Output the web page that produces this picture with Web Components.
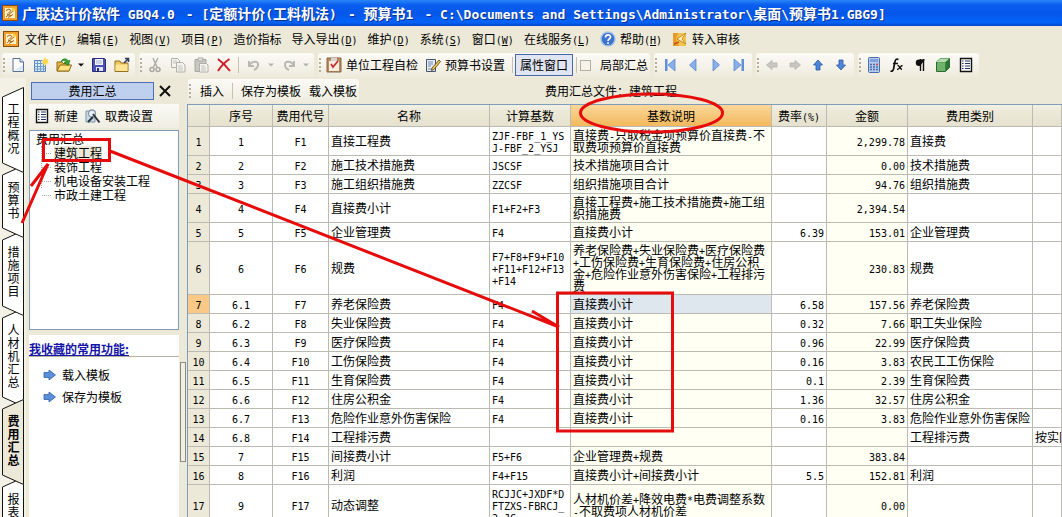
<!DOCTYPE html>
<html lang="zh-CN">
<head>
<meta charset="utf-8">
<title>广联达计价软件 GBQ4.0</title>
<style>
html, body { margin: 0; height: 100%; }
body { overflow: hidden; background: #ece9d8; color: #000; font: 12px/14px "Noto Sans CJK SC", sans-serif; }
</style>
</head>
<body>
<gbq-app></gbq-app>
<script>
const BASE = `
*{box-sizing:border-box}
:host{display:block}
button,a,input{font:inherit;color:inherit;margin:0;padding:0;border:0;background:none;text-decoration:none;white-space:nowrap}
.l{font-family:"DejaVu Sans Mono",monospace;font-size:10px;line-height:0}
svg{display:block;flex:none}
`;
const esc = s => s.replace(/&/g, '&amp;').replace(/</g, '&lt;');
/* Half-width runs are set in the monospaced face. */
const t = s => s.replace(/[\x20-\x7e]+/g, m => `<span class="l">${esc(m)}</span>`);
const key = (s, k) => `${t(s)}<span class="l">(<u>${k}</u>)</span>`;

function define(name, css, html) {
  customElements.define(name, class extends HTMLElement {
    constructor() { super(); this.attachShadow({ mode: 'open' }); }
    connectedCallback() {
      this.shadowRoot.innerHTML = `<style>${BASE}${css}</style>` + (typeof html === 'function' ? html(this) : html);
    }
  });
}

const ICONS = {
  logo: `<rect x=".5" y=".5" width="15" height="15" fill="#f0a030" stroke="#8a4a08"/><path d="M3 3h8l2 2v8H3z" fill="#fff3c8"/><path d="M4 5.500l3-1.500 2 1.500-3 3M4 12l8-7M6 12.500l5-3M5 9l4 2" stroke="#a85a10" stroke-width="1" fill="none"/><path d="M9 2l5 2-3 3z" fill="#ffce3a"/>`,
  doc: `<path d="M3 1.500h7l3.500 3.500v9.500H3z" fill="#fff" stroke="#5a6f98"/><path d="M10 1.500V5h3.500" fill="#cfe0f8" stroke="#5a6f98"/><path d="M4 13.500h9V8z" fill="#dce8fa"/>`,
  sheet: `<path d="M1.500 3.500h11v11h-11z" fill="#dcebfa" stroke="#4f7cae"/><path d="M1 6.500h12M1 9.500h12M1 12h12M4.500 3v12M7.500 3v12M10.500 3v12" stroke="#6d9cc9"/><path d="M12 0l1 2.500L15.500 2l-1 2.300 1.500 1.700-2.500.5L13 9l-1.600-2L9 7.500l1-2.300L8.500 3l2.500-.2z" fill="#ffd64a"/>`,
  open: `<path d="M1 5h5l1 1.500h6V14H1z" fill="#e9b53c" stroke="#8d6a16"/><path d="M1 14l3-6h11.500L13 14z" fill="#ffe07c" stroke="#8d6a16"/><path d="M5 5c1-4 6-4 7-1l2-.5-2 5-4-3 2-.6C9 3 7 3 5 5z" fill="#37a534" stroke="#17701a" stroke-width=".6"/>`,
  save: `<path d="M1.500 1.500h12l1 1v12h-13z" fill="#4a50b8" stroke="#262c78"/><path d="M4 2h8v6H4z" fill="#f3f5fb"/><path d="M5 4h6M5 6h6" stroke="#a6aecb"/><path d="M5 10h7v4H5z" fill="#dfe3ef"/><path d="M6 11h2v3H6z" fill="#262c78"/>`,
  folder: `<path d="M1 4h5l1 2h7v8.500H1z" fill="#eec65c" stroke="#927020"/><path d="M1.500 7.500h12V14h-12z" fill="#ffe494"/><path d="M10 6l4-4M11 1.500h3.500V5" stroke="#333b58" stroke-width="1.500" fill="none"/>`,
  cut: `<path d="M6 1l4 9M11 1L6.500 10" stroke="#a9a9a2" stroke-width="1.400"/><circle cx="5" cy="12.500" r="2" fill="none" stroke="#a9a9a2" stroke-width="1.500"/><circle cx="11" cy="12.500" r="2" fill="none" stroke="#a9a9a2" stroke-width="1.500"/>`,
  copy: `<path d="M1.500 1.500h6l2 2v7h-8z" fill="#f4f3ee" stroke="#b1b0a8"/><path d="M6.500 5.500h6l2.500 2.500v7H6.500z" fill="#f4f3ee" stroke="#b1b0a8"/><path d="M3 4h4M3 6h3M8 9h4M8 11h5M8 13h5" stroke="#c2c1b9"/>`,
  paste: `<path d="M2 2.500h11v12H2z" fill="#c9c8c0" stroke="#a9a8a0"/><path d="M5 1h5v3H5z" fill="#e8e7e0" stroke="#a9a8a0"/><path d="M6.500 6.500h7l1.500 1.500v7H6.500z" fill="#f5f4ef" stroke="#b1b0a8"/><path d="M8 9h4M8 11h5M8 13h5" stroke="#c2c1b9"/>`,
  del: `<path d="M2 2c4 3 8 7 12 12M13.500 2C9 5 5 9 2 14" stroke="#cf1f2c" stroke-width="2" fill="none"/>`,
  undo: `<path d="M3 4v5h5M3.500 8.500C6 3 13 4 12 8c0 2-2 4-4 5" stroke="#b9b8b1" stroke-width="2" fill="none"/>`,
  redo: `<path d="M13 4v5H8M12.500 8.500C10 3 3 4 4 8c0 2 2 4 4 5" stroke="#b9b8b1" stroke-width="2" fill="none"/>`,
  check: `<path d="M1 1h14v14H1z" fill="#b98b62" stroke="#8a6442"/><path d="M3 4h10v10H3z" fill="#f6ece0"/><path d="M5 1h6v3H5z" fill="#d8d3cb"/><path d="M5 7l2 3 5-6" stroke="#c53030" stroke-width="1.800" fill="none"/>`,
  edit: `<path d="M1.500 2.500h9v12h-9z" fill="#e4ebf5" stroke="#44546e"/><path d="M3 5h5M3 7h5M3 9h3M3 12h5" stroke="#7187a8"/><path d="M7 11l7-8 1.500 1.500-6.500 8-2.500 1z" fill="#f1c455" stroke="#4b3b14" stroke-width=".8"/>`,
  first: `<path d="M3 2h2.500v12H3z" fill="#5f8fd8"/><path d="M13 2v12L6 8z" fill="#8ab0ea" stroke="#4f80cc" stroke-width=".7"/>`,
  prev: `<path d="M11 2v12L4.500 8z" fill="#8ab0ea" stroke="#4f80cc" stroke-width=".7"/>`,
  next: `<path d="M5 2v12l6.500-6z" fill="#8ab0ea" stroke="#4f80cc" stroke-width=".7"/>`,
  last: `<path d="M10.500 2H13v12h-2.500z" fill="#5f8fd8"/><path d="M3 2v12l7-6z" fill="#8ab0ea" stroke="#4f80cc" stroke-width=".7"/>`,
  left: `<path d="M2.500 8L8 3.500V6h5v4H8v2.500z" fill="#c7c6c0" stroke="#b0afa8" stroke-width=".7"/>`,
  right: `<path d="M13.500 8L8 3.500V6H3v4h5v2.500z" fill="#c7c6c0" stroke="#b0afa8" stroke-width=".7"/>`,
  up: `<path d="M8 3l4.500 5H10v5H6V8H3.500z" fill="#4f86dc" stroke="#2a57a4" stroke-width=".8"/>`,
  down: `<path d="M8 13L3.500 8H6V3h4v5h2.500z" fill="#4f86dc" stroke="#2a57a4" stroke-width=".8"/>`,
  calc: `<rect x="2.500" y=".5" width="11" height="15" rx="1" fill="#b5cbee" stroke="#4a6ca8"/><path d="M4 2h8v3H4z" fill="#7fa2da"/><path d="M4 7.500h8M4 10h8M4 12.500h8" stroke="#496ca6" stroke-width="1.500" stroke-dasharray="2 1"/><path d="M10 7.500h2" stroke="#d9534a" stroke-width="1.500"/>`,
  fx: `<path d="M9.500 2.500c-2-1-3 0-3.500 2L4.500 12c-.5 2-1.500 2.500-3 2M4 6.500h5" stroke="#111" stroke-width="1.700" fill="none"/><path d="M8.500 8.500c2-.5 2 3.500 4.500 4M13.500 8.500c-2 0-3 4-5.500 4" stroke="#111" stroke-width="1.400" fill="none"/>`,
  para: `<path d="M13 2.500H7a3 3 0 0 0 0 6.500h1z" fill="#111"/><path d="M8.500 2v12M11.500 2v12" stroke="#111" stroke-width="1.400"/>`,
  cube: `<path d="M1.500 5l4-3.500h9v9l-4 4h-9z" fill="#4e9a4e" stroke="#2d6a30"/><path d="M1.500 5l4-3.500h9L10.500 5z" fill="#b5deb0"/><path d="M10.500 5l4-3.500v9l-4 4z" fill="#2f7434"/><path d="M2 5.500h8V14H2z" fill="#6db36a"/>`,
  list: `<path d="M2.500 1.500h11v13h-11z" fill="#fff" stroke="#111" stroke-width="1.400"/><path d="M4 4h1.500M4 6.500h1.500M4 9h1.500M4 11.500h1.500M7 4h5M7 6.500h5M7 9h5M7 11.500h5" stroke="#24305f"/>`,
  help: `<circle cx="8" cy="8" r="7" fill="#3c73cc" stroke="#a9c2ea" stroke-width="1.400"/><path d="M5.500 6.500c0-3.500 5-3.500 5-.5 0 2-2.500 1.800-2.500 4M8 11.200v1.800" stroke="#fff" stroke-width="1.700" fill="none"/>`,
  audit: `<path d="M1 2h13v13H1z" fill="#f4c34c"/><path d="M1 2h5L4 8l3 7H1z" fill="#e99a28"/><path d="M5 8l9-6-4 6 4 5z" fill="#fff1b8" stroke="#b87a18" stroke-width=".8"/><path d="M2 13l5-2" stroke="#c1521c" stroke-width="1.500"/>`,
  gear: `<path d="M1 3h9v11H1z" fill="#c9dbea" stroke="#7d93a8"/><circle cx="7" cy="5.500" r="3.500" fill="#e8f1f8" stroke="#8a96a2" stroke-width="1.300"/><path d="M8 6l6.500 8.500M3 14l5-5" stroke="#2d333a" stroke-width="2"/>`,
  go: `<path d="M2 5.500h5V3l6.500 5L7 13v-2.500H2z" fill="#5b8fd8" stroke="#2f5fa8" stroke-width=".8"/>`,
  close: `<path d="M3 3l10 10M13 3L3 13" stroke="#111" stroke-width="2"/>`,
  arrow: `<path d="M5 6.500h6L8 9.500z" fill="#111"/>`,
  arrowoff: `<path d="M5 6.500h6L8 9.500z" fill="#b5b4ac"/>`
};
define('gbq-icon', ':host{display:block;flex:none;width:16px;height:16px}',
  el => `<svg width="16" height="16" viewBox="0 0 16 16" aria-hidden="true">${ICONS[el.getAttribute('name')]}</svg>`);

define('gbq-title', `
:host{display:flex;align-items:center;gap:4px;height:26px;padding-left:2px;color:#fff;
background:linear-gradient(#2a86f8,#0a5ff0 18%,#0456e8 55%,#0464fb 85%,#0347c8)}
h1{display:flex;gap:11px;margin:0;font:bold 14px/18px "Noto Sans CJK SC",sans-serif;white-space:nowrap;text-shadow:1px 1px 0 #0a2f8c}
.l{font-size:13px}`,
  `<gbq-icon name="logo"></gbq-icon><h1>${['广联达计价软件 GBQ4.0', '- [定额计价(工料机法)', '- 预算书1', '- C:\\Documents and Settings\\Administrator\\桌面\\预算书1.GBG9]'].map(s => `<span>${t(s)}</span>`).join('')}</h1>`);

define('gbq-menu', `
:host{display:flex;align-items:center;height:26px;padding-left:3px;gap:10px}
button{display:flex;align-items:center;height:20px}
button gbq-icon{margin-right:4px}
gbq-icon.app{margin-right:-4px}
u{text-underline-offset:1px}`,
  `<gbq-icon class="app" name="logo"></gbq-icon>` +
  [['文件','F'],['编辑','E'],['视图','V'],['项目','P'],['造价指标'],['导入导出','D'],['维护','D'],['系统','S'],['窗口','W'],['在线服务','L'],['帮助','H','help'],['转入审核','','audit']]
  .map(([s, k, i]) => `<button>${i ? `<gbq-icon name="${i}"></gbq-icon>` : ''}<span>${k ? key(s, k) : s}</span></button>`).join(''));

define('gbq-group', `
:host{display:flex;flex:none;align-items:center;height:24px;padding-right:2px;border-radius:3px;background:linear-gradient(#fbfaf6,#f4f2e8 60%,#eeebdd)}
i{width:4px;height:16px;background:radial-gradient(circle at 1px 1px,#b4b0a0 1px,transparent 1px) 1px 1px/4px 4px}`,
  `<i></i><slot></slot>`);

define('gbq-tool', `
:host{flex:none}
button{display:flex;align-items:center;justify-content:center;min-width:23px;height:22px;gap:4px}
:host([name^=arrow]) button{min-width:12px;width:12px}
:host([pressed]) button{padding:0 4px;border:1px solid #4a68a8;background:#dfe5f2}
button:has(.t):has(gbq-icon){padding-left:4px}`,
  el => `<button>${el.getAttribute('name') ? `<gbq-icon name="${el.getAttribute('name')}"></gbq-icon>` : ''}${el.textContent ? '<span class="t"><slot></slot></span>' : ''}</button>`);

define('gbq-sep', ':host{width:1px;height:16px;background:#c5c2b2;margin:0 3px;flex:none}', '');

const tools = s => s.split(' ').map(n => n === '|' ? '<gbq-sep></gbq-sep>' : `<gbq-tool name="${n}"></gbq-tool>`).join('');
define('gbq-toolbar', `
:host{display:flex;align-items:center;gap:4px;height:26px;padding-left:2px}
.a{margin-right:3px}
.b{margin:0 2px 0 7px}
label{display:flex;align-items:center;gap:9px;white-space:nowrap}
input{appearance:none;width:11px;height:11px;border:1px solid #b3b09f;background:#f5f3ea}`,
  `<gbq-group>${tools('doc sheet open arrow save folder')}</gbq-group>
   <gbq-group>${tools('cut copy paste del | undo arrowoff redo arrowoff')}</gbq-group>
   <gbq-group><gbq-tool class="a" name="check">单位工程自检</gbq-tool><gbq-tool name="edit">预算书设置</gbq-tool>
   <gbq-sep class="b"></gbq-sep><gbq-tool pressed>属性窗口</gbq-tool><gbq-sep></gbq-sep>
   <label><input type="checkbox">局部汇总</label></gbq-group>
   <gbq-group>${tools('first prev next last')}</gbq-group>
   <gbq-group>${tools('left right up down')}</gbq-group>
   <gbq-group>${tools('calc fx para cube list')}</gbq-group>`);

define('gbq-tab', `
:host{position:relative;flex:none;width:22px;margin-bottom:-8px;--fill:#fff}
:host([active]){--fill:#ece9d8;z-index:9}
button{position:relative;display:block;width:22px;padding:15px 4px 19px 5px;line-height:13px;white-space:normal;word-break:break-all;text-align:center}
:host([active]) button{font-weight:bold}
.s{position:absolute;inset:0;display:flex;flex-direction:column}
.m{flex:1;border:1px solid #111;border-width:0 1px;background:var(--fill)}
path{fill:var(--fill)}
polyline{fill:none;stroke:#111}`,
  `<div class="s"><svg width="22" height="10"><path d="M0 10L22 0v10z"/><polyline points="0.500,10 21.500,0.500 21.500,10"/></svg><div class="m"></div>
   <svg width="22" height="10"><path d="M0 0h22v10z"/><polyline points="0.500,0 21.500,9.500 21.500,0"/></svg></div><button><slot></slot></button>`);

define('gbq-tabs', `
:host{display:flex;flex:none;flex-direction:column;width:26px;padding:9px 0 0 2px;overflow:hidden;background:#f3f1e6}
${[1,2,3,4,5,6].map(i => `gbq-tab:nth-child(${i}){z-index:${7 - i}}`).join('')}
gbq-tab[active]{z-index:9}`,
  ['工程概况','预算书','措施项目','人材机汇总','费用汇总','报表'].map(s => `<gbq-tab${s === '费用汇总' ? ' active' : ''}>${s}</gbq-tab>`).join(''));

define('gbq-side', `
:host{display:flex;flex:none;flex-direction:column;width:153px;padding:4px 0 0 3px}
.head{display:flex;align-items:center;gap:3px;padding-left:2px}
h2{margin:0;width:123px;height:18px;border:1px solid #4a6fb5;background:#bed0ee;font:12px/16px "Noto Sans CJK SC",sans-serif;text-align:center}
.bar{display:flex;gap:3px;height:24px;margin:4px 0 2px;align-items:center;background:linear-gradient(#faf9f4,#f0eee2);padding-left:1px}
.tree{height:200px;flex:none;border:1px solid #7f9db9;background:#fff;padding:1px 0 0 6px}
.tree a{display:block;line-height:14px;width:max-content}
ul{list-style:none;margin:0 0 0 5px;padding:0}
li{position:relative;padding-left:12px;border-left:1px dotted #aaa}
li::before{content:"";position:absolute;left:0;top:7px;width:9px;border-top:1px dotted #aaa}
li:last-child{border-color:transparent}
.on{background:#ece9d8}
.fav{flex:1;background:#fff;margin-top:5px;padding-top:7px}
h3{margin:0 0 7px;height:15px;border-bottom:1px solid #b5b2a0;font:bold 12px/14px "Noto Sans CJK SC",sans-serif;color:#1414a8}
h3 a{border-bottom:1px solid #1414a8;display:inline-block;height:14px}
.go{display:flex;align-items:center;gap:4px;height:22px;padding-left:13px}`,
  `<div class="head"><h2>费用汇总</h2><button title="关闭"><gbq-icon name="close"></gbq-icon></button></div>
   <div class="bar"><gbq-tool name="list">新建</gbq-tool><gbq-tool name="gear">取费设置</gbq-tool></div>
   <div class="tree"><a href="#">费用汇总</a><ul>${['建筑工程','装饰工程','机电设备安装工程','市政土建工程'].map((s, i) => `<li><a href="#"${i ? '' : ' class="on"'}>${s}</a></li>`).join('')}</ul></div>
   <div class="fav"><h3><a href="#">我收藏的常用功能:</a></h3><a class="go" href="#"><gbq-icon name="go"></gbq-icon>载入模板</a><a class="go" href="#"><gbq-icon name="go"></gbq-icon>保存为模板</a></div>`);

define('gbq-splitter', `
:host{display:flex;flex:none;flex-direction:column;justify-content:flex-end;width:8px;padding:0 1px 55px 1px}
button{height:100px;border:1px solid #8a8a80;background:#f1efe4}`, `<button title="折叠"></button>`);

const HEAD = ['', '序号', '费用代号', '名称', '计算基数', '基数说明', '费率(%)', '金额', '费用类别', ''];
const S = '直接费小计';
const ROWS = [
['1','F1','直接工程费','ZJF-FBF_1_YS\nJ-FBF_2_YSJ','直接费-只取税金项预算价直接费-不\n取费项预算价直接费','','2,299.78','直接费'],
['2','F2','施工技术措施费','JSCSF','技术措施项目合计','','0.00','技术措施费'],
['3','F3','施工组织措施费','ZZCSF','组织措施项目合计','','94.76','组织措施费'],
['4','F4',S,'F1+F2+F3','直接工程费+施工技术措施费+施工组\n织措施费','','2,394.54',''],
['5','F5','企业管理费','F4',S,'6.39','153.01','企业管理费'],
['6','F6','规费','F7+F8+F9+F10\n+F11+F12+F13\n+F14','养老保险费+失业保险费+医疗保险费\n+工伤保险费+生育保险费+住房公积\n金+危险作业意外伤害保险+工程排污\n费','','230.83','规费'],
['6.1','F7','养老保险费','F4',S,'6.58','157.56','养老保险费'],
['6.2','F8','失业保险费','F4',S,'0.32','7.66','职工失业保险'],
['6.3','F9','医疗保险费','F4',S,'0.96','22.99','医疗保险费'],
['6.4','F10','工伤保险费','F4',S,'0.16','3.83','农民工工伤保险'],
['6.5','F11','生育保险费','F4',S,'0.1','2.39','生育保险费'],
['6.6','F12','住房公积金','F4',S,'1.36','32.57','住房公积金'],
['6.7','F13','危险作业意外伤害保险','F4',S,'0.16','3.83','危险作业意外伤害保险'],
['6.8','F14','工程排污费','','','','','工程排污费','按实际'],
['7','F15','间接费小计','F5+F6','企业管理费+规费','','383.84',''],
['8','F16','利润','F4+F15','直接费小计+间接费小计','5.5','152.81','利润'],
['9','F17','动态调整','RCJJC+JXDF*D\nFTZXS-FBRCJ_\n2_JC','人材机价差+降效电费*电费调整系数\n-不取费项人材机价差','','0.00','']
];
define('gbq-grid', `
:host{flex:1;min-height:0;overflow:hidden;border:1px solid #7f9db9;border-width:1px 0 0 1px;background:#fff}
table{width:100%;border-collapse:separate;border-spacing:0;table-layout:fixed}
th,td{border:1px solid #bcbbb3;border-width:0 1px 1px 0;padding:2px 2px;height:19px;font-weight:normal;line-height:12px;white-space:pre;overflow:hidden;text-align:left;vertical-align:middle}
thead th{height:22px;background:linear-gradient(#f3f1e6,#ece9d8 30%,#e6e2d0);text-align:center}
thead th:nth-child(6){background:linear-gradient(#fbd79a,#f2b95c)}
tbody th{background:#ece9d8;text-align:center;padding:2px 0}
tbody th.cur{background:#fbc987}
td:nth-child(2),td:nth-child(3){text-align:center}
td:nth-child(6){background:#fffff4}
td:nth-child(7),td:nth-child(8){text-align:right}
td:nth-child(8){background:#fffff4}
td.cur{background:#dfe7ee}`,
  `<table><colgroup>${[22,63,56,161,81,201,55,81,125].map(w => `<col style="width:${w}px">`).join('')}<col></colgroup>
   <thead><tr>${HEAD.map(h => `<th scope="col">${t(h)}</th>`).join('')}</tr></thead>
   <tbody>${ROWS.map((r, i) => `<tr><th scope="row"${i === 6 ? ' class="cur"' : ''}>${t(String(i + 1))}</th>${[...r, ''].slice(0, 9).map((c, j) => `<td${i === 6 && j === 4 ? ' class="cur"' : ''}>${t(c)}</td>`).join('')}</tr>`).join('')}</tbody></table>`);

define('gbq-main', `
:host{display:flex;flex:1;min-width:0;flex-direction:column}
.bar{display:flex;align-items:center;height:26px;flex:none;padding:0 0 1px 1px;gap:186px}
gbq-tool,gbq-sep{margin:0 0 0 8px}
p{margin:0;white-space:nowrap}`,
  `<div class="bar"><gbq-group><gbq-tool>插入</gbq-tool><gbq-sep></gbq-sep><gbq-tool>保存为模板</gbq-tool><gbq-tool>载入模板</gbq-tool></gbq-group><p>费用汇总文件：建筑工程</p></div><gbq-grid></gbq-grid>`);

/* Red pen marks drawn over the window. */
define('gbq-marks', ':host{position:absolute;left:0;top:0;pointer-events:none;z-index:20}',
  `<svg width="1062" height="517" fill="none" stroke="#e60c0c" stroke-width="3" aria-hidden="true">
   <rect x="43.500" y="139.500" width="66" height="21"/><rect x="557.500" y="293" width="115" height="138"/>
   <ellipse cx="651.500" cy="113" rx="71" ry="19"/>
   <path d="M22 223L48 164L31 186M110 151L559 327L532 311"/></svg>`);

define('gbq-app', `
:host{display:flex;flex-direction:column;position:relative;height:100vh;overflow:hidden;background:#ece9d8}
.work{display:flex;flex:1;min-height:0}
gbq-title,gbq-menu,gbq-toolbar{flex:none}`,
  `<gbq-title></gbq-title><gbq-menu></gbq-menu><gbq-toolbar></gbq-toolbar>
   <div class="work"><gbq-tabs></gbq-tabs><gbq-side></gbq-side><gbq-splitter></gbq-splitter><gbq-main></gbq-main></div><gbq-marks></gbq-marks>`);
</script>
</body>
</html>
